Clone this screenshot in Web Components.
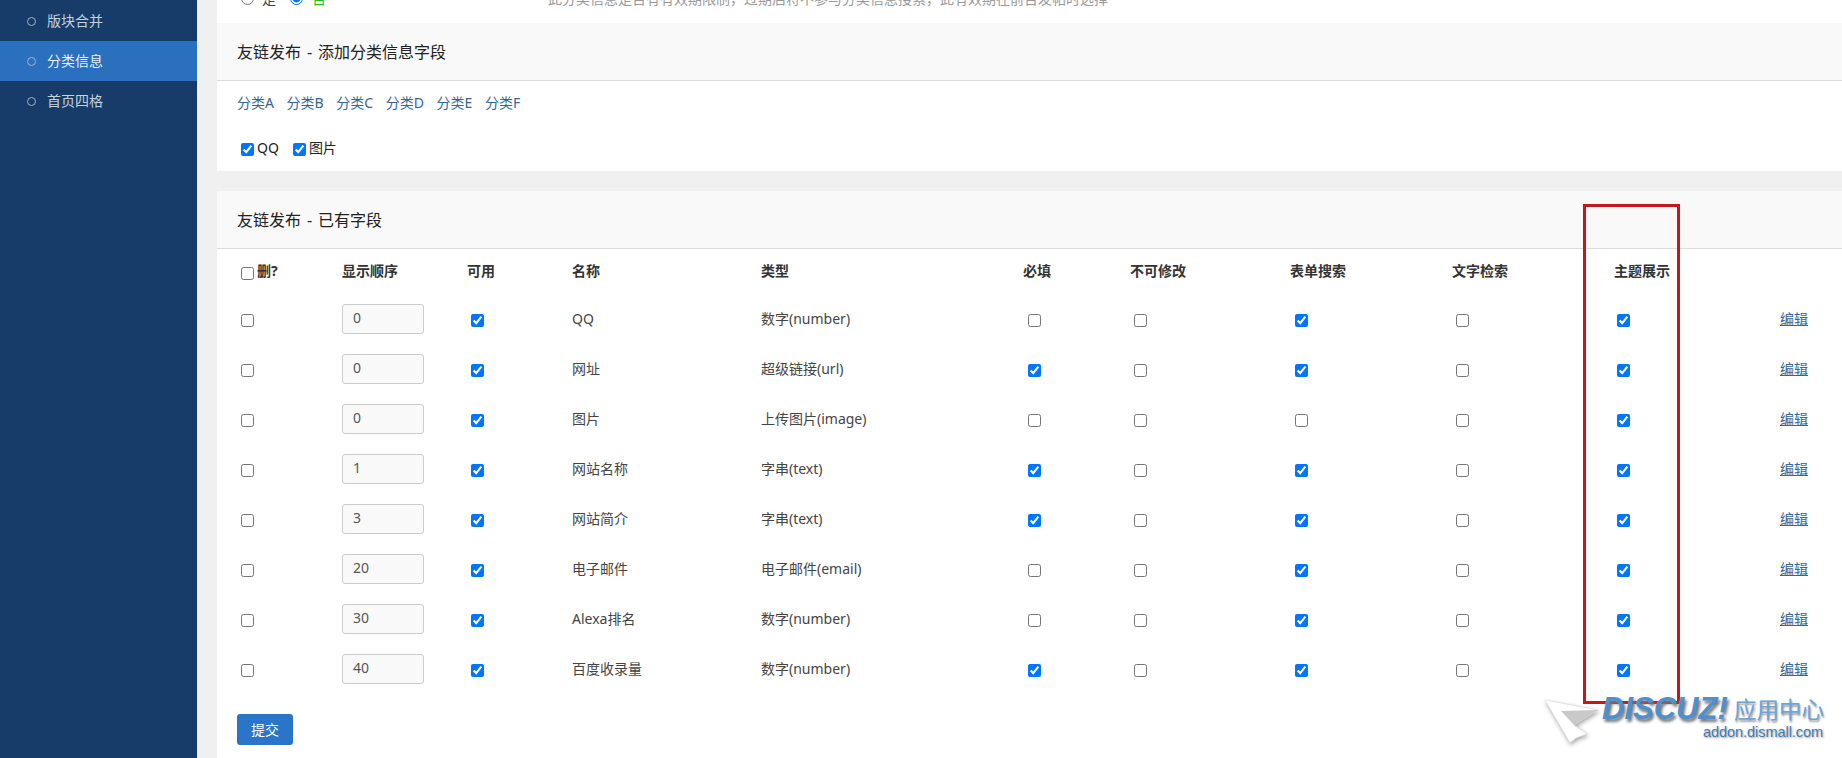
<!DOCTYPE html>
<html lang="zh"><head><meta charset="utf-8">
<style>
html,body{margin:0;height:758px;overflow:hidden;background:#f0f0f0}
body{font:14px "Noto Sans","Noto Sans CJK SC",sans-serif;color:#333}
</style></head><body>
<template id="t-nav"><style>
:host{display:flex;align-items:center;height:40px;padding-left:27px;gap:11px;color:#c4d1de;font-size:14px}
:host([active]){background:#2a70be;color:#e8f0f8}
i{display:block;width:7px;height:7px;border:1px solid #9fb3c8;border-radius:50%}
span{padding-bottom:2px}
</style><i></i><span><slot></slot></span></template>
<template id="t-app"><style>
:host{display:flex;height:758px;position:relative;overflow:hidden}
aside{width:197px;flex:none;background:#173c69;padding-top:1px;box-sizing:border-box;height:100%;display:flex;flex-direction:column}
main{flex:1;min-width:0;padding-left:20px;display:flex;flex-direction:column;gap:20px}
</style><aside><slot name="nav"></slot></aside><main><slot></slot></main><slot name="over"></slot></template>
<template id="t-card"><style>
:host{display:block;background:#fff}
header{height:56px;padding:0 0 1px 20px;box-sizing:content-box;background:#f9f9f9;border-bottom:1px solid #ddd;display:flex;align-items:center;font-size:16px;color:#222;word-spacing:1.75px;white-space:pre}
</style><header></header><slot></slot></template>
<template id="t-row"><style>
:host{display:grid;grid-template-columns:105px 125px 105px 189px 262px 107px 160px 162px 162px 166px 1fr;padding-left:20px;height:50px;align-items:center;color:#444;--mt:3px}
:host([head]){font-weight:700;color:#333;height:45px;padding-bottom:2px;box-sizing:border-box;--mt:5px}
</style><slot></slot></template>
<template id="t-check"><style>
:host{display:inline-flex;align-items:center;color:#222}
input{width:13px;height:13px;margin:var(--mt,2px) 3px 0 4px;flex:none}
span{padding-bottom:2px}
</style><input type="checkbox"><span><slot></slot></span></template>
<template id="t-num"><style>
:host{display:block;box-sizing:border-box;width:82px;height:30px;border:1px solid #ccc;border-radius:3px;background:#f9f9f9;padding-left:10px;line-height:26px;color:#555}
</style><slot></slot></template>

<x-app>
<x-nav slot="nav">版块合并</x-nav>
<x-nav slot="nav" active>分类信息</x-nav>
<x-nav slot="nav">首页四格</x-nav>

<div style="display:flex;flex-direction:column">
<x-top></x-top>
<x-card title="友链发布 - 添加分类信息字段" style="margin-top:-1px">
<x-types></x-types>
</x-card>
</div>
<x-card title="友链发布 - 已有字段" style="flex:1"><x-fields></x-fields></x-card>
<x-mark slot="over"></x-mark>
</x-app>

<script>
const mount=(el,id)=>{const r=el.attachShadow({mode:'open'});r.appendChild(document.getElementById(id).content.cloneNode(true));return r};
class XApp extends HTMLElement{constructor(){super();mount(this,'t-app')}}
class XNav extends HTMLElement{constructor(){super();mount(this,'t-nav')}}
class XCard extends HTMLElement{constructor(){super();const r=mount(this,'t-card');r.querySelector('header').textContent=this.getAttribute('title')||''}}
class XRow extends HTMLElement{constructor(){super();mount(this,'t-row')}}
class XCheck extends HTMLElement{constructor(){super();const r=mount(this,'t-check');r.querySelector('input').checked=this.hasAttribute('checked')}}
class XNum extends HTMLElement{constructor(){super();mount(this,'t-num')}}
class XTop extends HTMLElement{constructor(){super();const r=this.attachShadow({mode:'open'});r.innerHTML=`<style>
:host{display:flex;align-items:flex-end;height:24px;background:#fff;overflow:hidden;padding-left:20px;color:#444}
.in{display:flex;align-items:center;height:20px;margin-bottom:16px}
input{width:13px;height:13px;margin:0 0 0 4px}
.no{color:#2b2;margin-left:9px}.yes{margin:0 10px 0 8px}
.tip{color:#999;font-size:14px;margin-left:222px}
</style><div class="in"><input type="radio" name="a"><span class="yes">是</span><input type="radio" name="a" checked><span class="no">否</span><span class="tip">此分类信息是否有有效期限制，过期后将不参与分类信息搜索，此有效期在前台发帖时选择</span></div>`}}
class XTypes extends HTMLElement{constructor(){super();const r=this.attachShadow({mode:'open'});r.innerHTML=`<style>
:host{display:block;padding:9px 20px 0;height:90px;box-sizing:border-box}
.l{display:flex;gap:12.6px;color:#369;height:24px;align-items:center}
.c{display:flex;gap:10px;margin-top:23px}
</style><div class="l"><span>分类A</span><span>分类B</span><span>分类C</span><span>分类D</span><span>分类E</span><span>分类F</span></div>
<div class="c"><x-check checked>QQ</x-check><x-check checked>图片</x-check></div>`}}
class XFields extends HTMLElement{constructor(){super();const r=this.attachShadow({mode:'open'});
const rows=[['0','QQ','数字(number)',1,0,0,1,0,1],['0','网址','超级链接(url)',1,1,0,1,0,1],['0','图片','上传图片(image)',1,0,0,0,0,1],['1','网站名称','字串(text)',1,1,0,1,0,1],['3','网站简介','字串(text)',1,1,0,1,0,1],['20','电子邮件','电子邮件(email)',1,0,0,1,0,1],['30','Alexa排名','数字(number)',1,0,0,1,0,1],['40','百度收录量','数字(number)',1,1,0,1,0,1]];
const ck=(v,ml=0)=>`<span style="display:flex"><x-check ${v?'checked':''} style="margin-left:${ml}px"></x-check></span>`;
const hd=['显示顺序','可用','名称','类型','必填','不可修改','表单搜索','文字检索','主题展示',''];
r.innerHTML=`<style>
:host{display:block}
a{color:#369;text-decoration:underline}
.t{padding-bottom:2px}
button{all:unset;display:block;box-sizing:border-box;width:56px;height:31px;margin:20px 0 0 20px;background:#2a75c8;border-radius:3px;color:#fff;text-align:center;font:14px/30px "Noto Sans","Noto Sans CJK SC",sans-serif}
</style><x-row head><span style="display:flex"><x-check style="color:#333">删?</x-check></span>${hd.map(h=>`<span class="t">${h}</span>`).join('')}</x-row>
${rows.map(x=>`<x-row>${ck(0)}<span><x-num>${x[0]}</x-num></span>${ck(x[3])}<span class="t">${x[1]}</span><span class="t">${x[2]}</span>${ck(x[4],1)}${ck(x[5])}${ck(x[6],1)}${ck(x[7])}${ck(x[8],-1)}<span class="t"><a href="#">编辑</a></span></x-row>`).join('')}
<button>提交</button>`}}
class XMark extends HTMLElement{constructor(){super();const r=this.attachShadow({mode:'open'});r.innerHTML=`<style>
:host{display:contents}
.box{position:absolute;left:1583px;top:204px;width:97px;height:500px;box-sizing:border-box;border:3px solid #c4161c;pointer-events:none}
.wm{position:absolute;left:1544px;top:696px;width:290px;height:52px}
svg{position:absolute;left:0;top:0;width:60px;height:52px;filter:drop-shadow(1px 2px 2px rgba(0,0,0,.35))}
.d{position:absolute;left:58px;top:-3px;font:italic 700 31px/32px "Liberation Sans",sans-serif;letter-spacing:0;color:#4f8fcd;text-shadow:2px 3px 3px #777;white-space:nowrap}
.y{position:absolute;left:190px;top:-3px;font:22.5px/30px "Noto Sans CJK SC",sans-serif;color:#6aa5da;text-shadow:1px 2px 2px #999;white-space:nowrap}
.u{position:absolute;left:159px;top:26px;font:14.5px/20px "Liberation Sans",sans-serif;letter-spacing:-.05px;color:#3f7fb8;text-shadow:1px 1px 2px #999;white-space:nowrap}
</style><div class="box"></div><div class="wm">
<svg viewBox="0 0 60 52"><path d="M1 4 L54 14 L30 29 L43 38 L32 42 L26 47Z" fill="#fff" stroke="#ddd" stroke-width=".7"/><path d="M17 15 L54 14 L30 29Z" fill="#c9c9c9"/></svg>
<span class="d">DISCUZ!</span><span class="y">应用中心</span><span class="u">addon.dismall.com</span></div>`}}
customElements.define('x-check',XCheck);customElements.define('x-num',XNum);customElements.define('x-row',XRow);
customElements.define('x-nav',XNav);customElements.define('x-card',XCard);customElements.define('x-top',XTop);
customElements.define('x-types',XTypes);customElements.define('x-fields',XFields);customElements.define('x-mark',XMark);
customElements.define('x-app',XApp);
</script>
</body></html>
